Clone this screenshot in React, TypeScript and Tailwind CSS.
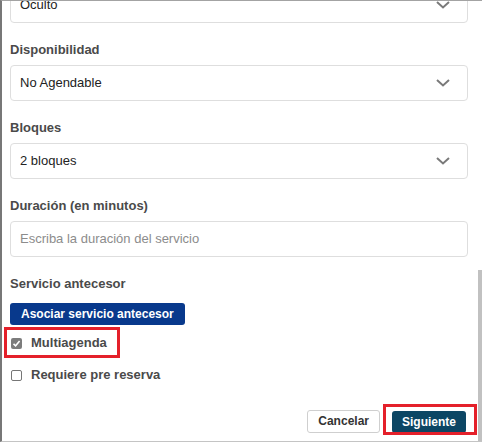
import React from 'react';

const font = { fontFamily: '"Liberation Sans", Arial, sans-serif' };

const Chevron = () => (
    <svg width="14" height="8" viewBox="0 0 14 8" className="shrink-0">
        <polyline points="1,1 7,6.5 13,1" fill="none" stroke="#7a7a7a" strokeWidth="2" />
    </svg>
);

const SelectBox = ({ value }: { value: string }) => (
    <div className="flex h-[36px] w-full items-center justify-between rounded-[4px] border border-[#dedede] bg-white pl-[9px] pr-[17px] text-[13px] text-[#222]">
        <span>{value}</span>
        <Chevron />
    </div>
);

const Label = ({ children }: { children: React.ReactNode }) => (
    <div className="mb-[5px] h-[20px] text-[13px] font-bold leading-[20px] text-[#4a4a4a]">{children}</div>
);

export default function App() {
    return (
        <div
            className="relative h-[442px] w-[482px] overflow-hidden border-t border-l-2 border-b border-t-[#a3a3a3] border-l-[#777] border-b-[#c4c4c4] bg-white"
            style={font}
        >
            <div className="ml-[8px] mt-[-14px] flex w-[458px] flex-col">
                {/* Visibilidad (cortado) */}
                <SelectBox value="Oculto" />

                <div className="mt-[17px]">
                    <Label>Disponibilidad</Label>
                    <SelectBox value="No Agendable" />
                </div>

                <div className="mt-[17px]">
                    <Label>Bloques</Label>
                    <SelectBox value="2 bloques" />
                </div>

                <div className="mt-[17px]">
                    <Label>Duración (en minutos)</Label>
                    <div className="flex h-[36px] w-full items-center rounded-[4px] border border-[#dedede] bg-white pl-[9px] text-[13px] text-[#8c8c8c]">
                        Escriba la duración del servicio
                    </div>
                </div>

                <div className="mt-[17px]">
                    <div className="mb-[9px] h-[20px] text-[13px] font-bold leading-[20px] text-[#4a4a4a]">
                        Servicio antecesor
                    </div>
                    <button className="flex h-[22px] items-center rounded-[3px] bg-[#08398c] px-[11px] text-[12px] font-bold text-white">
                        Asociar servicio antecesor
                    </button>
                </div>

                {/* Multiagenda */}
                <div className="relative mt-[8px] flex h-[20px] w-fit items-center pl-[1px]">
                    <span className="flex h-[11px] w-[11px] items-center justify-center rounded-[2px] bg-[#7c7c7c]">
                        <svg width="9" height="9" viewBox="0 0 9 9">
                            <polyline points="1.5,4.8 3.6,6.8 7.6,2" fill="none" stroke="#fff" strokeWidth="1.6" />
                        </svg>
                    </span>
                    <span className="ml-[9px] text-[13px] font-bold leading-[20px] text-[#4a4a4a]">Multiagenda</span>
                    <div className="pointer-events-none absolute left-[-6px] top-[-6px] h-[31px] w-[116px] border-[3px] border-[#e4202a]" />
                </div>

                {/* Requiere pre reserva */}
                <div className="mt-[12px] flex h-[20px] items-center pl-[1px]">
                    <span className="h-[11px] w-[11px] rounded-[2px] border border-[#767676] bg-white" />
                    <span className="ml-[9px] text-[13px] font-bold leading-[20px] text-[#4a4a4a]">Requiere pre reserva</span>
                </div>

                {/* Botones */}
                <div className="mt-[24px] mr-[2px] flex items-center justify-end gap-[12px]">
                    <button className="h-[23px] rounded-[3px] border border-[#cfcfcf] bg-white px-[10px] text-[12px] font-bold text-[#333]">
                        Cancelar
                    </button>
                    <div className="relative">
                        <button className="mt-[1px] h-[22px] rounded-[3px] bg-[#0c4664] px-[10px] text-[12px] font-bold text-white">
                            Siguiente
                        </button>
                        <div className="pointer-events-none absolute left-[-9px] top-[-5px] h-[31px] w-[94px] border-[3px] border-[#e4202a]" />
                    </div>
                </div>
            </div>

            {/* barra de desplazamiento */}
            <div className="absolute right-0 top-[269px] h-[172px] w-[4px] bg-[#c1c1c1]" />
        </div>
    );
}
